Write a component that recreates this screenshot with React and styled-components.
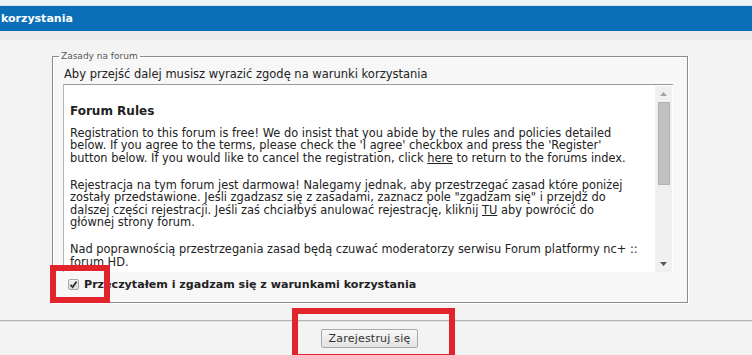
import React from "react";
import styled, { createGlobalStyle } from "styled-components";

const Global = createGlobalStyle`
  html, body { margin: 0; padding: 0; background: #f3f3f3; }
  body { font-family: "DejaVu Sans", Verdana, sans-serif; color: #222; }
  * { box-sizing: border-box; }
`;

const Page = styled.div`
  position: relative;
  width: 752px;
  height: 355px;
  overflow: hidden;
  background: #f3f3f3;
`;

const TopStrip = styled.div`
  height: 6px;
  background: #eef3f7;
  border-bottom: 1px solid #d9e3ec;
`;

const Header = styled.div`
  height: 25px;
  background: #0b6fb8;
  color: #fff;
  font-weight: bold;
  font-size: 11px;
  line-height: 25px;
  padding-left: 1px;
`;

const SubBand = styled.div`
  height: 9px;
  background: #ececec;
`;

const Main = styled.div`
  padding: 11px 0 0 52px;
  height: 280px;
`;

const Fieldset = styled.fieldset`
  margin: 0;
  width: 636px;
  padding: 0 14px 0 10px;
  border: 1px solid #8c8c8c;
  box-shadow: inset 1px 1px 0 #fff, 1px 1px 0 #fff;
  background: #f7f7f7;
`;

const Legend = styled.legend`
  font-size: 9px;
  color: #555;
  padding: 0 2px;
  margin-left: -4px;
`;

const Intro = styled.div`
  font-size: 11.5px;
  line-height: 14px;
  margin: 6px 0 3px 1px;
`;

const RulesBox = styled.div`
  display: flex;
  height: 188px;
  background: #fff;
  border-top: 1px solid #9a9a9a;
  border-left: 1px solid #b5b5b5;
  overflow: hidden;
`;

const RulesText = styled.div`
  flex: 1;
  padding: 20px 0 0 6px;
  font-size: 11.4px;
  line-height: 12.5px;
  color: #222;
  white-space: nowrap;
`;

const RulesTitle = styled.div`
  font-weight: bold;
  font-size: 12px;
  margin-bottom: 9px;
`;

const Para = styled.p`
  margin: 0 0 14.5px 0;
`;

const Link = styled.span`
  text-decoration: underline;
`;

const Scrollbar = styled.div`
  width: 17px;
  margin: 1px 1px 0 0;
  background: #f0f0f0;
  display: flex;
  flex-direction: column;
  align-items: center;
`;

const Arrow = styled.div`
  height: 16px;
  display: flex;
  align-items: center;
  justify-content: center;
`;

const Thumb = styled.div`
  width: 12px;
  height: 83px;
  background: #c1c1c1;
  border: 1px solid #b3b3b3;
`;

const Spacer = styled.div`
  flex: 1;
`;

const AgreeRow = styled.label`
  display: flex;
  align-items: center;
  gap: 5px;
  height: 30px;
  padding: 0 0 5px 5px;
  font-size: 11.1px;
  font-weight: bold;
`;

const Check = styled.span`
  width: 11px;
  height: 11px;
  border: 1px solid #a8a8a8;
  border-radius: 2px;
  background: linear-gradient(#f4f4f4, #dcdcdc);
  display: flex;
  align-items: center;
  justify-content: center;
`;

const Divider = styled.div`
  height: 2px;
  background: #b4b4b4;
  border-bottom: 1px solid #e4e4e4;
`;

const Footer = styled.div`
  display: flex;
  justify-content: center;
  width: 739px;
  padding-top: 7px;
`;

const Button = styled.button`
  font-family: "DejaVu Sans", Verdana, sans-serif;
  font-size: 11px;
  color: #333;
  height: 19px;
  padding: 0 7px;
  border: 1px solid #a9a9a9;
  border-radius: 2px;
  background: linear-gradient(#f8f8f8, #e2e2e2);
  letter-spacing: 0.2px;
`;

const Mark = styled.div`
  position: absolute;
  border: 6px solid #e3232c;
  left: ${(p) => p.x}px;
  top: ${(p) => p.y}px;
  width: ${(p) => p.w}px;
  height: ${(p) => p.h}px;
`;

export default function App() {
  return (
    <Page>
      <Global />
      <TopStrip />
      <Header>korzystania</Header>
      <SubBand />
      <Main>
        <Fieldset>
          <Legend>Zasady na forum</Legend>
          <Intro>Aby przejść dalej musisz wyrazić zgodę na warunki korzystania</Intro>
          <RulesBox>
            <RulesText>
              <RulesTitle>Forum Rules</RulesTitle>
              <Para>
                Registration to this forum is free! We do insist that you abide by the rules and policies detailed
                <br />
                below. If you agree to the terms, please check the 'I agree' checkbox and press the 'Register'
                <br />
                button below. If you would like to cancel the registration, click <Link>here</Link> to return to the forums index.
              </Para>
              <Para>
                Rejestracja na tym forum jest darmowa! Nalegamy jednak, aby przestrzegać zasad które poniżej
                <br />
                zostały przedstawione. Jeśli zgadzasz się z zasadami, zaznacz pole "zgadzam się" i przejdź do
                <br />
                dalszej części rejestracji. Jeśli zaś chciałbyś anulować rejestrację, kliknij <Link>TU</Link> aby powrócić do
                <br />
                głównej strony forum.
              </Para>
              <Para>
                Nad poprawnością przestrzegania zasad będą czuwać moderatorzy serwisu Forum platformy nc+ ::
                <br />
                forum HD.
              </Para>
            </RulesText>
            <Scrollbar>
              <Arrow>
                <svg width="7" height="4" viewBox="0 0 7 4"><path d="M0 4 L3.5 0 L7 4 Z" fill="#a3a3a3" /></svg>
              </Arrow>
              <Thumb />
              <Spacer />
              <Arrow>
                <svg width="7" height="4" viewBox="0 0 7 4"><path d="M0 0 L7 0 L3.5 4 Z" fill="#555" /></svg>
              </Arrow>
            </Scrollbar>
          </RulesBox>
          <AgreeRow>
            <Check>
              <svg width="9" height="9" viewBox="0 0 9 9"><path d="M1.5 4.8 L3.6 7 L7.6 1.6" stroke="#333" strokeWidth="1.8" fill="none" /></svg>
            </Check>
            Przeczytałem i zgadzam się z warunkami korzystania
          </AgreeRow>
        </Fieldset>
      </Main>
      <Divider />
      <Footer>
        <Button>Zarejestruj się</Button>
      </Footer>
      <Mark x={50} y={265} w={60} h={38} />
      <Mark x={292} y={308} w={163} h={52} />
    </Page>
  );
}
